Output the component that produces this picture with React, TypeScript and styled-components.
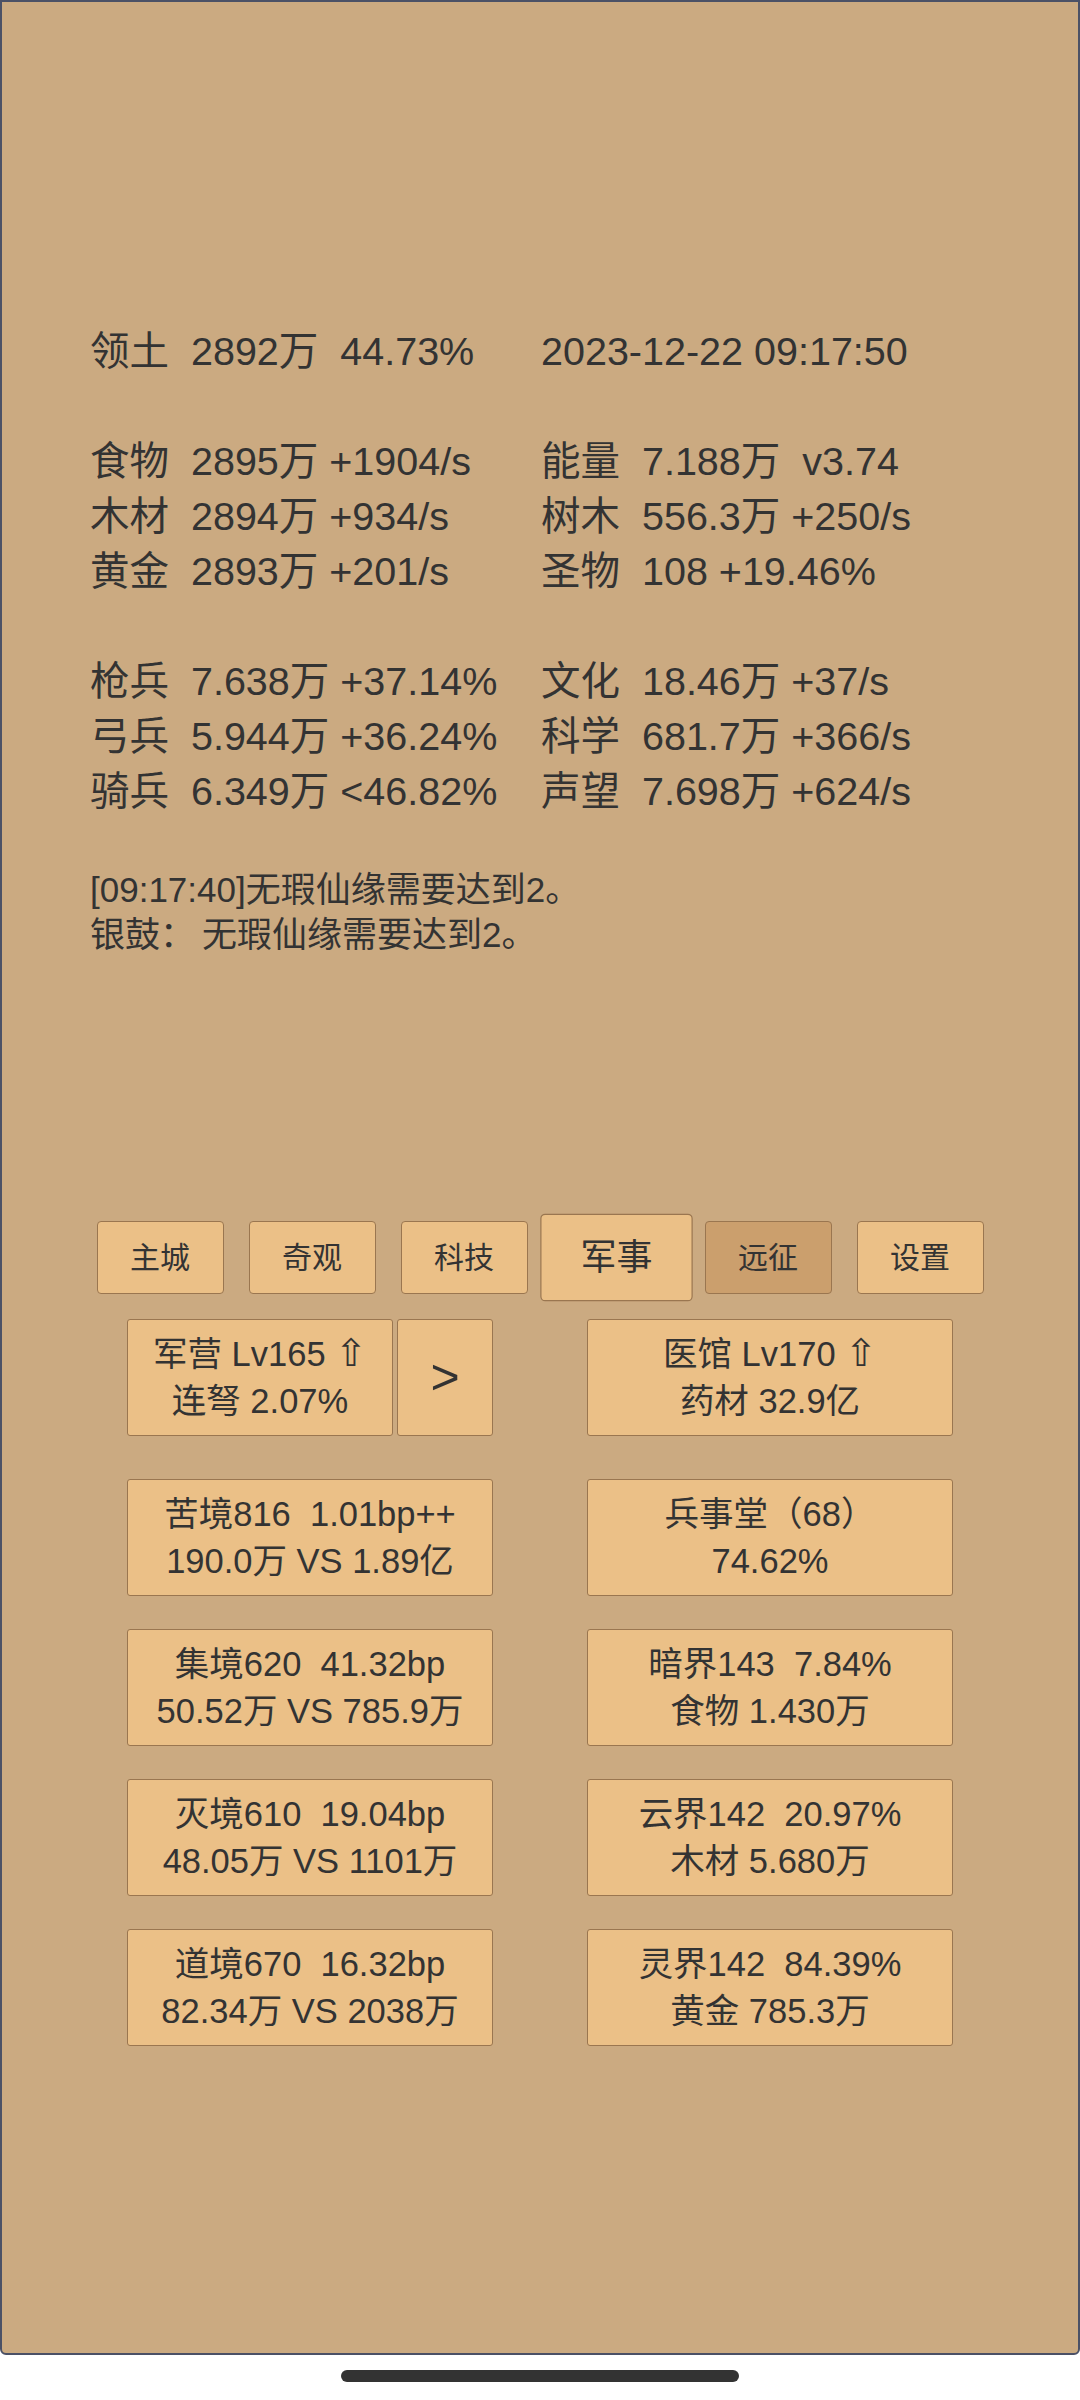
import { FunctionComponent } from "react"
import styled, { createGlobalStyle } from "styled-components"

const Colors = {
    Panel: '#CBAA81',
    PanelBorder: '#4b5166',
    Card: '#EBC087',
    CardPressed: '#CB9F6D',
    CardBorder: '#9a7650',
    Text: '#333333',
}

const fontStack = `"Liberation Sans", "Noto Sans CJK SC", sans-serif`

const GlobalStyle = createGlobalStyle`
    html, body {
        margin: 0;
        padding: 0;
        background: #ffffff;
    }
    body {
        font-family: ${fontStack};
        color: ${Colors.Text};
    }
`

const statGroups = [
    [
        ['领土  2892万  44.73%', '2023-12-22 09:17:50'],
    ],
    [
        ['食物  2895万 +1904/s', '能量  7.188万  v3.74'],
        ['木材  2894万 +934/s', '树木  556.3万 +250/s'],
        ['黄金  2893万 +201/s', '圣物  108 +19.46%'],
    ],
    [
        ['枪兵  7.638万 +37.14%', '文化  18.46万 +37/s'],
        ['弓兵  5.944万 +36.24%', '科学  681.7万 +366/s'],
        ['骑兵  6.349万 <46.82%', '声望  7.698万 +624/s'],
    ],
]

const logs = [
    '[09:17:40]无瑕仙缘需要达到2。',
    '银鼓：\u2009无瑕仙缘需要达到2。',
]

const tabs = [
    { text: '主城' },
    { text: '奇观' },
    { text: '科技' },
    { text: '军事', active: true },
    { text: '远征', pressed: true },
    { text: '设置' },
]

const cards = [
    ['苦境816  1.01bp++', '190.0万 VS 1.89亿'],
    ['兵事堂（68）', '74.62%'],
    ['集境620  41.32bp', '50.52万 VS 785.9万'],
    ['暗界143  7.84%', '食物 1.430万'],
    ['灭境610  19.04bp', '48.05万 VS 1101万'],
    ['云界142  20.97%', '木材 5.680万'],
    ['道境670  16.32bp', '82.34万 VS 2038万'],
    ['灵界142  84.39%', '黄金 785.3万'],
]

const Screen = styled.div`
    width: 1080px;
    display: flex;
    flex-direction: column;
    align-items: center;
`
const Panel = styled.main`
    width: 1080px;
    height: 2355px;
    box-sizing: border-box;
    border: 2px solid ${Colors.PanelBorder};
    border-radius: 0 0 6px 6px;
    background: ${Colors.Panel};
    padding-top: 322px;
    display: flex;
    flex-direction: column;
`
const StatsArea = styled.section`
    padding-left: 88px;
    display: flex;
    flex-direction: column;
    gap: 55px;
`
const StatGroup = styled.div`
    display: grid;
    grid-template-columns: 451px auto;
    font-size: 39.5px;
    line-height: 55px;
`
const StatCell = styled.div`
    white-space: pre;
`
const LogArea = styled.section`
    padding-left: 88px;
    margin-top: 48px;
    font-size: 35px;
    line-height: 45px;
    white-space: pre;
`
const TabBar = styled.nav`
    margin-top: 264px;
    display: flex;
    justify-content: center;
    gap: 25px;
`
const Tab = styled.div<{ $active?: boolean; $pressed?: boolean }>`
    width: 127px;
    height: 73px;
    box-sizing: border-box;
    padding-bottom: 5px;
    display: flex;
    align-items: center;
    justify-content: center;
    border: 1px solid ${Colors.CardBorder};
    border-radius: 4px;
    background: ${({ $pressed }) => ($pressed ? Colors.CardPressed : Colors.Card)};
    font-size: 30px;
    transform: ${({ $active }) => ($active ? 'scale(1.2)' : 'none')};
`
const CardGrid = styled.section`
    margin-top: 25px;
    display: grid;
    grid-template-columns: 366px 366px;
    column-gap: 94px;
    row-gap: 33px;
    justify-content: center;
`
const SplitCell = styled.div`
    display: flex;
    gap: 4px;
    margin-bottom: 10px;
`
const Card = styled.div<{ $grow?: boolean; $big?: boolean; $first?: boolean }>`
    height: 117px;
    box-sizing: border-box;
    flex: ${({ $grow }) => ($grow ? '1' : 'none')};
    width: ${({ $big, $grow }) => ($big ? '96px' : $grow ? 'auto' : '366px')};
    margin-bottom: ${({ $first }) => ($first ? '10px' : '0')};
    display: flex;
    flex-direction: column;
    align-items: center;
    justify-content: center;
    border: 1px solid ${Colors.CardBorder};
    border-radius: 3px;
    background: ${Colors.Card};
    font-size: ${({ $big }) => ($big ? '50px' : '34.5px')};
    line-height: 47px;
    white-space: pre;
`
const Arrow = styled.span`
    font-family: "DejaVu Sans", sans-serif;
    font-size: 38px;
    line-height: 0;
`
const HomeBar = styled.div`
    margin-top: 15px;
    width: 398px;
    height: 12px;
    border-radius: 6px;
    background: #333333;
`

const LevelLine: FunctionComponent<{ text: string }> = ({ text }) => (
    <div>
        {text} <Arrow>⇧</Arrow>
    </div>
)

export default function App() {
    return (
        <Screen>
            <GlobalStyle />
            <Panel>
                <StatsArea>
                    {statGroups.map((group, gi) => (
                        <StatGroup key={gi}>
                            {group.map(([left, right], ri) => [
                                <StatCell key={ri + 'l'}>{left}</StatCell>,
                                <StatCell key={ri + 'r'}>{right}</StatCell>,
                            ])}
                        </StatGroup>
                    ))}
                </StatsArea>
                <LogArea>
                    {logs.map((line, i) => (
                        <div key={i}>{line}</div>
                    ))}
                </LogArea>
                <TabBar>
                    {tabs.map(({ text, active, pressed }) => (
                        <Tab key={text} $active={active} $pressed={pressed}>
                            {text}
                        </Tab>
                    ))}
                </TabBar>
                <CardGrid>
                    <SplitCell>
                        <Card $grow>
                            <LevelLine text="军营 Lv165" />
                            <div>连弩 2.07%</div>
                        </Card>
                        <Card $big>&gt;</Card>
                    </SplitCell>
                    <Card $first>
                        <LevelLine text="医馆 Lv170" />
                        <div>药材 32.9亿</div>
                    </Card>
                    {cards.map(([top, bottom], i) => (
                        <Card key={i}>
                            <div>{top}</div>
                            <div>{bottom}</div>
                        </Card>
                    ))}
                </CardGrid>
            </Panel>
            <HomeBar />
        </Screen>
    )
}
